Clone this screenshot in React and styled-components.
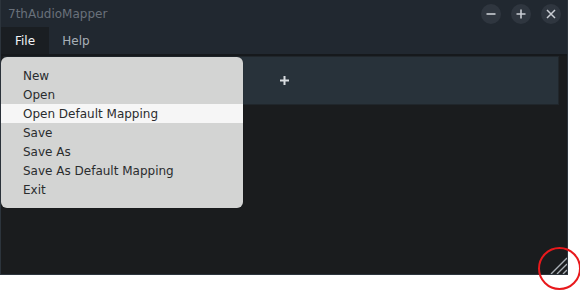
import React from 'react';
import styled, { createGlobalStyle } from 'styled-components';

const GlobalStyle = createGlobalStyle`
  html, body {
    margin: 0;
    padding: 0;
    background: #ffffff;
  }
  body {
    font-family: "DejaVu Sans", Verdana, sans-serif;
  }
`;

const Page = styled.div`
  position: relative;
  width: 580px;
  height: 290px;
`;

const Window = styled.div`
  position: relative;
  width: 568px;
  height: 275px;
  box-sizing: border-box;
  border: 1px solid #2c343c;
  border-top: none;
  background: #1a1c1e;
  display: flex;
  flex-direction: column;
`;

const TitleBar = styled.div`
  height: 27px;
  flex: none;
  background: #212830;
  display: flex;
  align-items: center;
  justify-content: space-between;
  padding: 0 6px 0 7px;
`;

const Title = styled.span`
  font-size: 12px;
  color: #69717b;
`;

const Controls = styled.div`
  display: flex;
  gap: 10px;
`;

const CtrlButton = styled.div`
  width: 20px;
  height: 20px;
  border-radius: 50%;
  background: #2f363f;
  display: flex;
  align-items: center;
  justify-content: center;
  svg {
    display: block;
  }
`;

const MenuBar = styled.div`
  height: 27px;
  flex: none;
  background: #212830;
  display: flex;
  border-bottom: 2px solid #16191c;
`;

const MenuTab = styled.div`
  width: ${p => p.$w}px;
  display: flex;
  align-items: center;
  justify-content: center;
  font-size: 12px;
  color: ${p => (p.$active ? '#f2f4f6' : '#a9b0b8')};
  background: ${p => (p.$active ? '#1a1e22' : 'transparent')};
`;

const Content = styled.div`
  flex: 1;
  padding: 0 8px 0 2px;
`;

const Panel = styled.div`
  height: 49px;
  background: #28323a;
  border: 1px solid #20262b;
  box-sizing: border-box;
  display: flex;
  align-items: center;
  justify-content: center;
  padding-left: 7px;
  svg {
    display: block;
  }
`;

const Dropdown = styled.div`
  position: absolute;
  left: 1px;
  top: 57px;
  width: 242px;
  padding: 9px 0;
  background: #d3d4d3;
  border-radius: 6px;
  box-shadow: 0 0 1px rgba(0, 0, 0, 0.4);
  z-index: 2;
`;

const MenuItem = styled.div`
  height: 19px;
  display: flex;
  align-items: center;
  padding-left: 22px;
  font-size: 12px;
  color: #2a2c2e;
  background: ${p => (p.$hover ? '#f6f6f6' : 'transparent')};
`;

const Grip = styled.svg`
  position: absolute;
  right: 0;
  bottom: 0;
`;

const Marker = styled.div`
  position: absolute;
  left: 538px;
  top: 247px;
  width: 39px;
  height: 39px;
  border: 2px solid #e8191c;
  border-radius: 50%;
  z-index: 3;
`;

const items = [
  'New',
  'Open',
  'Open Default Mapping',
  'Save',
  'Save As',
  'Save As Default Mapping',
  'Exit',
];

export default function App() {
  return (
    <Page>
      <GlobalStyle />
      <Window>
        <TitleBar>
          <Title>7thAudioMapper</Title>
          <Controls>
            <CtrlButton>
              <svg width="12" height="12" viewBox="0 0 12 12">
                <path d="M1.5 6h9" stroke="#c9cdd3" strokeWidth="1.6" />
              </svg>
            </CtrlButton>
            <CtrlButton>
              <svg width="12" height="12" viewBox="0 0 12 12">
                <path d="M1.5 6h9M6 1.5v9" stroke="#c9cdd3" strokeWidth="1.6" />
              </svg>
            </CtrlButton>
            <CtrlButton>
              <svg width="12" height="12" viewBox="0 0 12 12">
                <path d="M2 2l8 8M10 2l-8 8" stroke="#c9cdd3" strokeWidth="1.5" />
              </svg>
            </CtrlButton>
          </Controls>
        </TitleBar>
        <MenuBar>
          <MenuTab $active $w={48}>File</MenuTab>
          <MenuTab $w={54}>Help</MenuTab>
        </MenuBar>
        <Content>
          <Panel>
            <svg width="9" height="9" viewBox="0 0 9 9">
              <path d="M0 4.5h9M4.5 0v9" stroke="#d8dcdf" strokeWidth="2" />
            </svg>
          </Panel>
        </Content>
        <Grip width="18" height="18" viewBox="0 0 18 18">
          <path d="M2 18L18 2M8 18L18 8M14 18L18 14" stroke="#aab0b6" strokeWidth="1.4" />
        </Grip>
      </Window>
      <Dropdown>
        {items.map(label => (
          <MenuItem key={label} $hover={label === 'Open Default Mapping'}>
            {label}
          </MenuItem>
        ))}
      </Dropdown>
      <Marker />
    </Page>
  );
}
